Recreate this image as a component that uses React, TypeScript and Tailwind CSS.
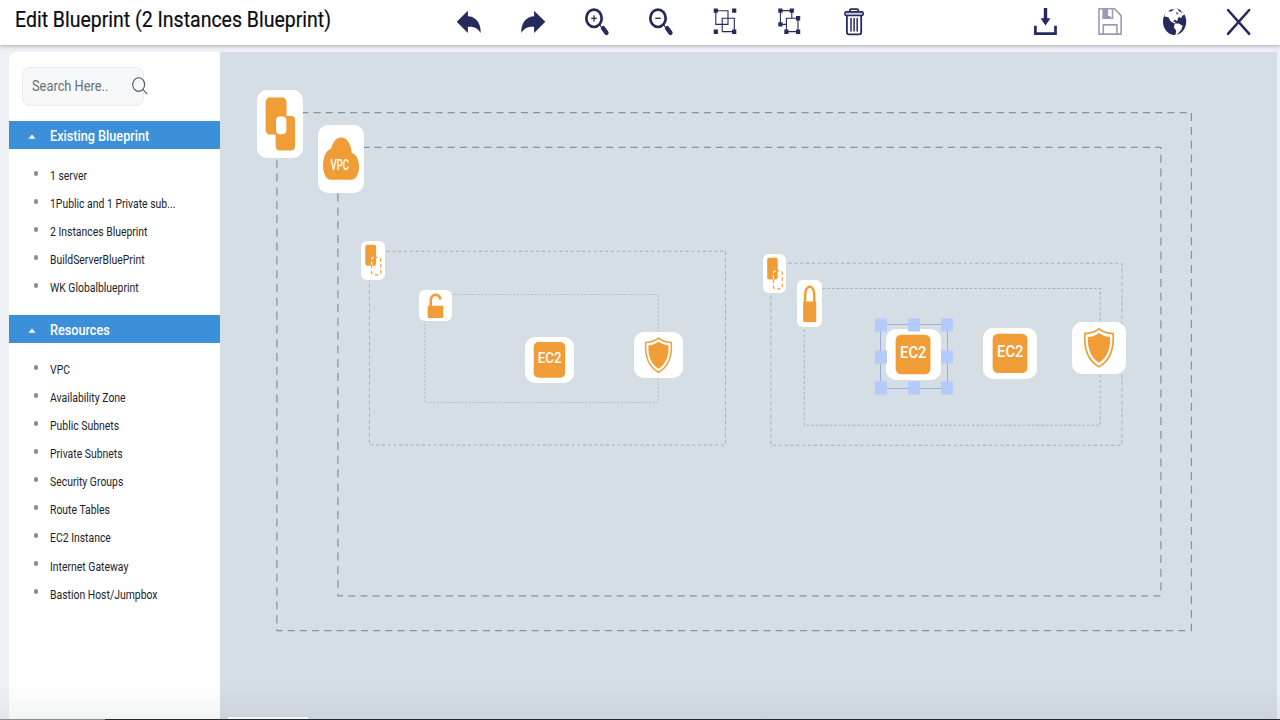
import React from 'react';

type NodeKind = 'zone' | 'vpc' | 'subnet' | 'unlock' | 'lock' | 'ec2' | 'shield';

interface CanvasNode {
  id: string;
  kind: NodeKind;
  x: number;
  y: number;
  w: number;
  h: number;
}

interface Boundary {
  id: string;
  x: number;
  y: number;
  w: number;
  h: number;
  dash: [number, number];
  color: string;
  width: number;
}

// horizontal squeeze of the canvas content
const SQUEEZE = 0.884;

const blueprints = [
  '1 server',
  '1Public and 1 Private sub...',
  '2 Instances Blueprint',
  'BuildServerBluePrint',
  'WK Globalblueprint',
];

const resources = [
  'VPC',
  'Availability Zone',
  'Public Subnets',
  'Private Subnets',
  'Security Groups',
  'Route Tables',
  'EC2 Instance',
  'Internet Gateway',
  'Bastion Host/Jumpbox',
];

const boundaries: Boundary[] = [
  { id: 'zone', x: 56.9, y: 60.6, w: 914.5, h: 518, dash: [8, 5.8], color: '#8b9299', width: 1.4 },
  { id: 'vpc', x: 117.9, y: 95.4, w: 823, h: 448.5, dash: [8, 5.8], color: '#8b9299', width: 1.4 },
  { id: 'subnet-a', x: 149.5, y: 199.3, w: 356, h: 193.7, dash: [3.7, 2.8], color: '#a9b1b8', width: 1.1 },
  { id: 'sg-a', x: 204.9, y: 242.5, w: 233.3, h: 108, dash: [2.3, 1.7], color: '#b3bbc2', width: 1 },
  { id: 'subnet-b', x: 550.9, y: 211.3, w: 351, h: 182, dash: [3.8, 2.8], color: '#a9b1b8', width: 1.1 },
  { id: 'sg-b', x: 584.3, y: 236.5, w: 296, h: 136.7, dash: [3, 2.2], color: '#a9b1b8', width: 1.1 },
];

const nodes: CanvasNode[] = [
  { id: 'zone', kind: 'zone', x: 37, y: 38.2, w: 46.3, h: 68 },
  { id: 'vpc', kind: 'vpc', x: 98, y: 73, w: 46.3, h: 67.8 },
  { id: 'subnet-a', kind: 'subnet', x: 141, y: 189.3, w: 24, h: 38.7 },
  { id: 'unlock', kind: 'unlock', x: 199, y: 238, w: 32.7, h: 31 },
  { id: 'ec2-a', kind: 'ec2', x: 304.8, y: 284.7, w: 49.2, h: 46.3 },
  { id: 'shield-a', kind: 'shield', x: 413.5, y: 279.7, w: 49.5, h: 46.3 },
  { id: 'subnet-b', kind: 'subnet', x: 543, y: 201.5, w: 23.4, h: 39.8 },
  { id: 'lock', kind: 'lock', x: 576.8, y: 227.7, w: 25.3, h: 47.3 },
  { id: 'ec2-b', kind: 'ec2', x: 666.4, y: 276.7, w: 54.4, h: 51.5 },
  { id: 'ec2-c', kind: 'ec2', x: 762.8, y: 275.8, w: 54.4, h: 51.3 },
  { id: 'shield-b', kind: 'shield', x: 851.8, y: 270, w: 54.6, h: 51.5 },
];

const handles = [
  [0, 0], [0.5, 0], [1, 0],
  [0, 0.5], [1, 0.5],
  [0, 1], [0.5, 1], [1, 1],
];

const ORANGE = '#f09d37';

const ToolIcon: React.FC<{ children: React.ReactNode }> = ({ children }) => (
  <svg width="28" height="30" viewBox="0 0 28 30" fill="none" className="text-[#242b5c]">
    {children}
  </svg>
);

const UndoIcon = () => (
  <ToolIcon>
    <path d="M1.7 14.8 12.9 3.7V9.3C20.5 9.6 26 15.5 25.7 26C22.5 20.6 18.5 19.4 12.9 19.7V26Z" fill="currentColor" />
  </ToolIcon>
);

const RedoIcon = () => (
  <ToolIcon>
    <path d="M26.3 14.8 15.1 3.7V9.3C7.5 9.6 2 15.5 2.3 26C5.5 20.6 9.5 19.4 15.1 19.7V26Z" fill="currentColor" />
  </ToolIcon>
);

const ZoomIcon: React.FC<{ plus?: boolean }> = ({ plus }) => (
  <ToolIcon>
    <ellipse cx="11" cy="11.3" rx="7.7" ry="8.7" stroke="currentColor" strokeWidth="2.7" />
    <path d="M8.2 11.3H13.8" stroke="currentColor" strokeWidth="1.3" />
    {plus && <path d="M11 8.2V14.4" stroke="currentColor" strokeWidth="1.3" />}
    <path d="M16.8 18.2 18.2 19.8" stroke="currentColor" strokeWidth="1.2" />
    <path d="M20 21.2 23.5 25.8" stroke="currentColor" strokeWidth="4.4" strokeLinecap="round" />
  </ToolIcon>
);

const GroupIcon = () => (
  <ToolIcon>
    <path d="M4.8 3.8H17V17.4H4.8ZM11.2 11.2H23.3V24.6H11.2Z" stroke="currentColor" strokeWidth="1.1" />
    <path d="M2.7 1.4h4.2v4.4H2.7ZM21.1 1.4h4.2v4.4h-4.2ZM2.7 22.4h4.2v4.5H2.7ZM21.1 22.4h4.2v4.5h-4.2Z" fill="currentColor" />
  </ToolIcon>
);

const UngroupIcon = () => (
  <ToolIcon>
    <path d="M11.4 17.4H5.4V3.6H16.8V11.2M11.4 11.2H23V24.6H11.4Z" stroke="currentColor" strokeWidth="1.1" />
    <path d="M3.3 1.4h4.2v4.4H3.3ZM14.7 1.4h4.2v4.4h-4.2ZM3.3 15.2h4.2v4.4H3.3ZM21 9h4.2v4.6H21ZM9.3 22.4h4.2v4.5H9.3ZM21 22.4h4.2v4.5H21Z" fill="currentColor" />
  </ToolIcon>
);

const TrashIcon = () => (
  <ToolIcon>
    <path d="M10.8 4.6V3.3Q10.8 2.1 12 2.1H18Q19.2 2.1 19.2 3.3V4.6" stroke="currentColor" strokeWidth="1.6" />
    <rect x="5.9" y="4.9" width="18.3" height="3.6" rx="1.5" fill="#c9cbd8" stroke="currentColor" strokeWidth="1.6" />
    <path d="M7.9 8.6V25.3Q7.9 27.4 10 27.4H20.1Q22.2 27.4 22.2 25.3V8.6" stroke="currentColor" strokeWidth="1.8" />
    <path d="M12 11.5V24M15.1 11.5V24M18.2 11.5V24" stroke="currentColor" strokeWidth="1.5" strokeLinecap="round" />
  </ToolIcon>
);

const DownloadIcon = () => (
  <ToolIcon>
    <path d="M13.8 1H17.2V11.2H20.4L15.5 18.5 10.6 11.2H13.8Z" fill="currentColor" />
    <path d="M5.4 18.8V26.6H25.5V18.8" stroke="currentColor" strokeWidth="2.7" />
  </ToolIcon>
);

const SaveIcon = () => (
  <ToolIcon>
    <g stroke="#9a9cb6" strokeWidth="1.6">
      <path d="M4 1.8H19.5L26.1 8.6V27.1H4Z" />
      <path d="M8.1 1.8V11.3H17.5V1.8" />
      <path d="M8.3 27V17.9H21.9V27" />
    </g>
    <path d="M8.1 1.8H13.1V9H15.5V11.3H8.1Z" fill="#9a9cb6" />
  </ToolIcon>
);

const GlobeIcon = () => (
  <ToolIcon>
    <ellipse cx="14.6" cy="14.6" rx="11.6" ry="13.4" fill="currentColor" />
    <path d="M5.2 6.2C7 3.6 9.5 1.8 12.2 1.1L17.5 1.3C20.8 2.4 23 4.4 24.6 7.8L22.5 8.6 21 11.2 19 9.8 17.8 11.8 17.2 14.2 14.8 12.6 13.3 14.2 15.6 15.6 14.6 16.6 10.6 14.2 8.4 10.2 4.4 9.4Z" fill="#fff" />
    <path d="M14.8 16.4 18.8 16.6 22.6 18.8 21.4 22.4 17.6 27.2 15.4 28.2 16.2 23.6 13.8 20.4Z" fill="#fff" />
    <path d="M8 4.2 11.4 2.2 14.6 2.8 10.6 4.4ZM15.8 5.2 18.4 6 17 7.8ZM17.2 1.6 20.2 3.1 22.4 6 19 4.2Z" fill="currentColor" />
  </ToolIcon>
);

const CloseIcon = () => (
  <ToolIcon>
    <path d="M3 3 24.2 26.8M24.2 3 3 26.8" stroke="currentColor" strokeWidth="2.5" strokeLinecap="round" />
  </ToolIcon>
);

const ToolButton: React.FC<{ label: string; children: React.ReactNode }> = ({ label, children }) => (
  <button aria-label={label} className="flex w-16 items-center justify-center">
    {children}
  </button>
);

const Header = () => (
  <header className="relative z-10 flex h-[45px] items-center bg-white pb-px shadow-[0_1px_4px_rgba(60,60,80,0.4)]">
    <h1 className="mb-[5px] w-[437px] pl-[15px] text-[22px] leading-7 text-[#0c0d10]">
      <span className="inline-block origin-left scale-x-[0.886] whitespace-nowrap [-webkit-text-stroke:0.2px_#0c0d10]">
        Edit Blueprint (2 Instances Blueprint)
      </span>
    </h1>
    <div className="flex">
      <ToolButton label="Undo"><UndoIcon /></ToolButton>
      <ToolButton label="Redo"><RedoIcon /></ToolButton>
      <ToolButton label="Zoom in"><ZoomIcon plus /></ToolButton>
      <ToolButton label="Zoom out"><ZoomIcon /></ToolButton>
      <ToolButton label="Group"><GroupIcon /></ToolButton>
      <ToolButton label="Ungroup"><UngroupIcon /></ToolButton>
      <ToolButton label="Delete"><TrashIcon /></ToolButton>
    </div>
    <div className="ml-auto flex gap-px pr-[9px]">
      <ToolButton label="Download"><DownloadIcon /></ToolButton>
      <ToolButton label="Save"><SaveIcon /></ToolButton>
      <ToolButton label="Publish"><GlobeIcon /></ToolButton>
      <ToolButton label="Close"><CloseIcon /></ToolButton>
    </div>
  </header>
);

const Section: React.FC<{ title: string; items: string[] }> = ({ title, items }) => (
  <section>
    <h2 className="flex h-[27.5px] items-center bg-[#3c90d9] pl-[19px] pt-[3px] text-[15.3px] font-medium text-white">
      <svg width="8" height="5" viewBox="0 0 8 5" className="mr-[14px]">
        <path d="M0.5 4.8 4 0.6 7.5 4.8Z" fill="#fff" />
      </svg>
      <span className="origin-left scale-x-[0.828] whitespace-nowrap pt-px">{title}</span>
    </h2>
    <ul className="pb-[13.3px] pt-[13px]">
      {items.map((item) => (
        <li key={item} className="flex h-[28.05px] items-center pl-[25px] text-[12.5px] text-[#20232b]">
          <span className="mb-[5px] mr-[11.7px] h-[5px] w-1 shrink-0 rounded-full bg-[#8c8c8f]" />
          <span className="origin-left scale-x-[0.833] whitespace-nowrap pt-[2px]">{item}</span>
        </li>
      ))}
    </ul>
  </section>
);

const Sidebar = () => (
  <aside className="w-[211px] shrink-0 rounded-tl-lg bg-white pt-[14.5px]">
    <div className="mb-[15.5px] ml-[13px] flex h-[39px] w-[122px] items-center rounded-lg border border-[#e8eaed] bg-[#f6f8fa] pl-[9px]">
      <span className="w-[100px] shrink-0 origin-left scale-x-[0.885] whitespace-nowrap pt-[2px] text-[14.5px] text-[#6a6e75]">
        Search Here..
      </span>
      <svg width="16" height="18" viewBox="0 0 16 18" fill="none" stroke="#55585e" strokeWidth="1.1" className="shrink-0">
        <ellipse cx="6.7" cy="7.6" rx="6" ry="6.8" />
        <path d="M11 12.5 15.2 17.2" />
      </svg>
    </div>
    <Section title="Existing Blueprint" items={blueprints} />
    <Section title="Resources" items={resources} />
  </aside>
);

const glyphs: Record<NodeKind, { viewBox: string; art: React.ReactNode }> = {
  zone: {
    viewBox: '0 0 46.5 68',
    art: (
      <>
        <rect x="8.7" y="7.6" width="21" height="37" rx="4" ry="4.6" fill={ORANGE} />
        <rect x="18.7" y="26" width="19.6" height="34.6" rx="4" ry="4.6" fill={ORANGE} />
        <rect x="19.1" y="26.6" width="10.4" height="17.6" rx="3.8" ry="4.4" fill="#fff" />
      </>
    ),
  },
  vpc: {
    viewBox: '0 0 46.5 68',
    art: (
      <>
        <path
          d="M13.5 55C8 55 5.1 48.5 5.1 40.5C5.1 31.5 8.6 25 13.2 23.8C14.6 17 18.6 12.6 23.3 12.6C28.8 12.6 33.4 18.5 33.8 28.2C38.4 29.2 41.2 35 41.2 41.8C41.2 50 37.8 55 32.3 55Z"
          fill={ORANGE}
        />
        <text x="12.6" y="45.4" fontSize="15.5" fontWeight="500" fill="#fff" textLength="18.6" lengthAdjust="spacingAndGlyphs">
          VPC
        </text>
      </>
    ),
  },
  subnet: {
    viewBox: '0 0 24 39',
    art: (
      <>
        <rect x="4.3" y="3.7" width="10.8" height="21.3" rx="2" fill={ORANGE} />
        <rect x="10.6" y="16.6" width="9.2" height="17.6" rx="2.4" fill="none" stroke={ORANGE} strokeWidth="1.2" strokeDasharray="3.6 2.4" />
        <path d="M10.6 24.5V18.8Q10.8 16.6 12.8 16.5H15" fill="none" stroke="#fff" strokeWidth="1.2" strokeDasharray="3.6 2.2" />
      </>
    ),
  },
  unlock: {
    viewBox: '0 0 32.8 31',
    art: (
      <>
        <rect x="8.7" y="15.7" width="15.7" height="12.3" rx="1" fill={ORANGE} />
        <path d="M11.8 16V10.5C11.8 3.2 21.2 3.2 21.4 9.6" fill="none" stroke={ORANGE} strokeWidth="2.6" />
      </>
    ),
  },
  lock: {
    viewBox: '0 0 25.5 47.3',
    art: (
      <>
        <rect x="6.2" y="21.6" width="13.2" height="20.4" rx="1" fill={ORANGE} />
        <path d="M8.2 22.5V15C8.2 4 17.4 4 17.4 15V22.5" fill="none" stroke={ORANGE} strokeWidth="2.5" />
      </>
    ),
  },
  ec2: {
    viewBox: '0 0 54.7 51.5',
    art: (
      <>
        <rect x="9.7" y="5.7" width="35" height="39.6" rx="5.5" fill={ORANGE} />
        <text x="14.2" y="28.7" fontSize="16.8" fontWeight="500" fill="#fff" textLength="26.4" lengthAdjust="spacingAndGlyphs">
          EC2
        </text>
      </>
    ),
  },
  shield: {
    viewBox: '0 0 55 51.7',
    art: (
      <>
        <path
          d="M27.2 6.9C31.5 10.2 36 11.4 41.4 11.6C42.3 25 39 38.5 27.2 44.9C15.4 38.5 12.1 25 13 11.6C18.4 11.4 22.9 10.2 27.2 6.9Z"
          fill="none"
          stroke={ORANGE}
          strokeWidth="1.7"
        />
        <path
          d="M27.2 11C30.8 13.6 34.4 14.8 38.4 15.1C38.8 25.5 36.2 35.6 27.2 40.9C18.2 35.6 15.6 25.5 16 15.1C20 14.8 23.6 13.6 27.2 11Z"
          fill={ORANGE}
        />
      </>
    ),
  },
};

const NodeCard: React.FC<{ node: CanvasNode }> = ({ node }) => {
  const { viewBox, art } = glyphs[node.kind];
  const small = node.w < 40;
  return (
    <div
      className={`absolute bg-white ${small ? 'rounded-[6px]' : 'rounded-[10px]'}`}
      style={{ left: node.x, top: node.y, width: node.w, height: node.h }}
    >
      <svg viewBox={viewBox} preserveAspectRatio="none" className="h-full w-full">
        {art}
      </svg>
    </div>
  );
};

const Selection = () => (
  <div className="absolute left-[660px] top-[272px] h-[65px] w-[68px] border border-[#97ade9]">
    {handles.map(([hx, hy]) => (
      <span
        key={`${hx}-${hy}`}
        className="absolute h-[13px] w-[12px] -translate-x-1/2 -translate-y-1/2 bg-[#b3cafb]"
        style={{ left: `${hx * 100}%`, top: `${hy * 100}%` }}
      />
    ))}
  </div>
);

const Canvas = () => (
  <main className="relative mr-[3px] flex-1 overflow-hidden bg-[#d5dde5]">
    <svg className="absolute inset-0 h-full w-full" fill="none">
      {boundaries.map((b) => (
        <path
          key={b.id}
          transform={`translate(${b.x} ${b.y}) scale(${SQUEEZE} 1)`}
          d={`M0 0H${b.w / SQUEEZE}V${b.h}H0Z`}
          stroke={b.color}
          strokeWidth={b.width}
          strokeDasharray={b.dash.join(' ')}
        />
      ))}
    </svg>
    {nodes.map((node) => (
      <NodeCard key={node.id} node={node} />
    ))}
    <Selection />
  </main>
);

export default function App() {
  return (
    <div className="relative flex h-[720px] w-[1280px] flex-col overflow-hidden bg-[#eff0f5] font-['Roboto',sans-serif]">
      <Header />
      <div className="flex min-h-0 flex-1 pl-[9px] pt-[7px]">
        <Sidebar />
        <Canvas />
      </div>
      <div className="pointer-events-none absolute inset-x-0 bottom-0 h-9 bg-gradient-to-b from-transparent to-[#5a6a70]/8" />
      <div className="absolute bottom-px left-[228px] h-[2px] w-20 bg-[#f4f5f6]" />
      <div className="absolute inset-x-0 bottom-0 flex h-px bg-[#26272e]">
        <div className="w-[105px] bg-[#8a8b8d]" />
      </div>
    </div>
  );
}
